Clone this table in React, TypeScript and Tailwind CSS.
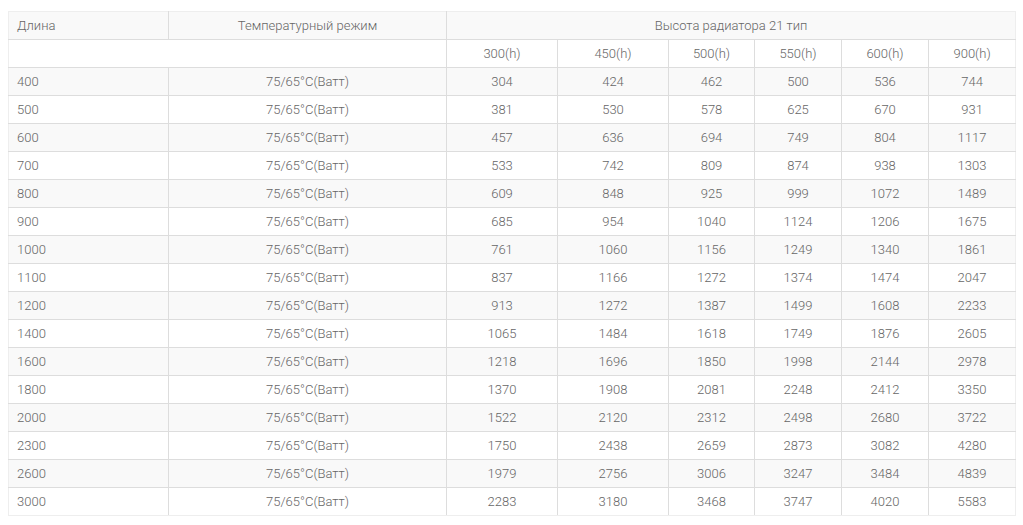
const heights = ["300(h)", "450(h)", "500(h)", "550(h)", "600(h)", "900(h)"];

const rows: [number, number[]][] = [
  [400, [304, 424, 462, 500, 536, 744]],
  [500, [381, 530, 578, 625, 670, 931]],
  [600, [457, 636, 694, 749, 804, 1117]],
  [700, [533, 742, 809, 874, 938, 1303]],
  [800, [609, 848, 925, 999, 1072, 1489]],
  [900, [685, 954, 1040, 1124, 1206, 1675]],
  [1000, [761, 1060, 1156, 1249, 1340, 1861]],
  [1100, [837, 1166, 1272, 1374, 1474, 2047]],
  [1200, [913, 1272, 1387, 1499, 1608, 2233]],
  [1400, [1065, 1484, 1618, 1749, 1876, 2605]],
  [1600, [1218, 1696, 1850, 1998, 2144, 2978]],
  [1800, [1370, 1908, 2081, 2248, 2412, 3350]],
  [2000, [1522, 2120, 2312, 2498, 2680, 3722]],
  [2300, [1750, 2438, 2659, 2873, 3082, 4280]],
  [2600, [1979, 2756, 3006, 3247, 3484, 4839]],
  [3000, [2283, 3180, 3468, 3747, 4020, 5583]],
];

// cell borders: inner lines darker, outer edge lighter
const cell =
  "h-[28px] py-0 px-2 border border-[#dddddd] first:border-l-[#eeeeee] last:border-r-[#eeeeee] font-light";

export default function App() {
  return (
    <div className="w-[1023px] h-[525px] bg-white pt-[11px] px-2 font-['Roboto',sans-serif] text-[13px] text-[#666666]">
      <table className="w-[1007px] border-collapse table-fixed">
        <colgroup>
          <col className="w-[160px]" />
          <col className="w-[278px]" />
          <col className="w-[111px]" />
          <col className="w-[111px]" />
          <col className="w-[86px]" />
          <col className="w-[87px]" />
          <col className="w-[87px]" />
          <col className="w-[87px]" />
        </colgroup>
        <tbody>
          <tr className="bg-[#f9f9f9]">
            <td className={cell + " text-left border-t-[#eeeeee]"}>Длина</td>
            <td className={cell + " text-center border-t-[#eeeeee]"}>Температурный режим</td>
            <td colSpan={6} className={cell + " text-center border-t-[#eeeeee]"}>
              Высота радиатора 21 тип
            </td>
          </tr>
          <tr className="bg-white">
            <td colSpan={2} className={cell}></td>
            {heights.map((h) => (
              <td key={h} className={cell + " text-center"}>
                {h}
              </td>
            ))}
          </tr>
          {rows.map(([len, vals], i) => {
            const last = i === rows.length - 1;
            const b = last ? " border-b-[#eeeeee]" : "";
            return (
              <tr key={len} className={i % 2 === 0 ? "bg-[#f9f9f9]" : "bg-white"}>
                <td className={cell + " text-left" + b}>{len}</td>
                <td className={cell + " text-center" + b}>75/65°C(Ватт)</td>
                {vals.map((v, j) => (
                  <td key={j} className={cell + " text-center" + b}>
                    {v}
                  </td>
                ))}
              </tr>
            );
          })}
        </tbody>
      </table>
    </div>
  );
}
